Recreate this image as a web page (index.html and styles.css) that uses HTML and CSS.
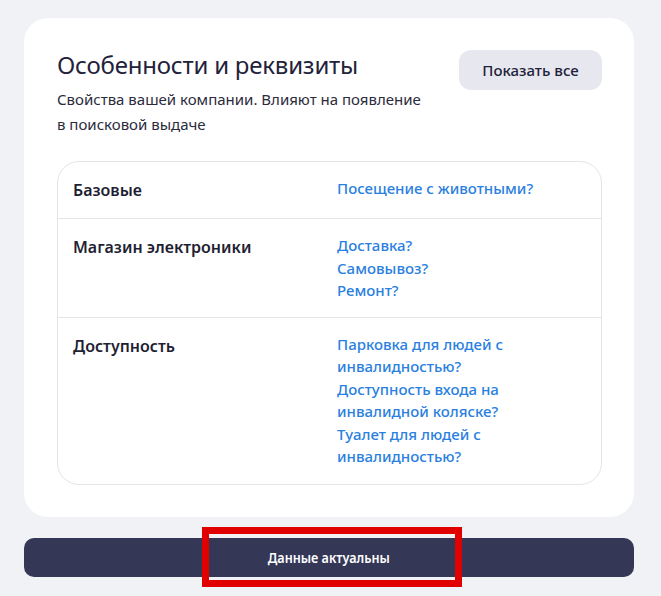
FILE: index.html
```html
<!DOCTYPE html>
<html lang="ru">
<head>
<meta charset="utf-8">
<link rel="stylesheet" href="styles.css">
</head>
<body>
<div class="page">
  <section class="card">
    <div class="head">
      <div class="head-text">
        <h2 class="title">Особенности и реквизиты</h2>
        <p class="subtitle">Свойства вашей компании. Влияют на появление<br>в поисковой выдаче</p>
      </div>
      <button class="show-all">Показать все</button>
    </div>
    <div class="table">
      <div class="row">
        <div class="label">Базовые</div>
        <div class="links"><a>Посещение с животными?</a></div>
      </div>
      <div class="row">
        <div class="label">Магазин электроники</div>
        <div class="links"><a>Доставка?</a><a>Самовывоз?</a><a>Ремонт?</a></div>
      </div>
      <div class="row">
        <div class="label">Доступность</div>
        <div class="links"><a>Парковка для людей с инвалидностью?</a><a>Доступность входа на инвалидной коляске?</a><a>Туалет для людей с инвалидностью?</a></div>
      </div>
    </div>
  </section>
  <div class="actual-wrap">
    <button class="actual"><span class="actual-text">Данные актуальны</span></button>
    <div class="highlight"></div>
  </div>
</div>
</body>
</html>
```
FILE: styles.css
```css
* { box-sizing: border-box; }
html, body { margin: 0; padding: 0; }
body {
  background: #f1f2f6;
  font-family: "Noto Sans", "Open Sans", sans-serif;
  color: #22223a;
  width: 661px;
  height: 596px;
  overflow: hidden;
}
.page {
  padding: 18px 27px 0 24px;
  display: flex;
  flex-direction: column;
  gap: 21px;
}
.card {
  background: #fff;
  border-radius: 24px;
  padding: 32px 32px 32px 33px;
}
.head {
  display: flex;
  justify-content: space-between;
  align-items: flex-start;
}
.title {
  margin: 0;
  font-size: 24px;
  font-weight: 400;
  line-height: 30px;
  color: #22223a;
  letter-spacing: -0.2px;
}
.subtitle {
  margin: 7px 0 0;
  font-size: 15px;
  line-height: 25px;
  color: #2b2b3c;
}
.show-all {
  border: none;
  background: #e7e8ef;
  border-radius: 12px;
  height: 40px;
  width: 143px;
  font-family: inherit;
  font-size: 15px;
  font-weight: 500;
  color: #22223a;
  padding: 0;
}
.table {
  margin-top: 24px;
  border: 1px solid #e4e5ea;
  border-radius: 22px;
  overflow: hidden;
}
.row {
  display: grid;
  grid-template-columns: 264px 1fr;
  padding: 15px 16px 16px 15px;
  border-top: 1px solid #e4e5ea;
}
.row:first-child { border-top: none; }
.row:nth-child(2) { padding-bottom: 15px; }
.label {
  font-size: 16px;
  font-weight: 600;
  line-height: 24px;
  color: #1f1f33;
  padding-top: 1px;
}
.links {
  display: flex;
  flex-direction: column;
  width: 215px;
}
.links a {
  font-size: 15px;
  font-weight: 500;
  line-height: 22.5px;
  color: #2a7fe0;
}
.actual-wrap {
  position: relative;
}
.actual {
  width: 100%;
  height: 39px;
  border: none;
  border-radius: 10px;
  background: #353757;
  color: #fff;
  font-family: "Noto Sans", sans-serif;
  font-size: 14px;
  font-weight: 600;
  padding: 0;
}
.actual-text {
  display: inline-block;
  transform: scaleX(0.9);
}
.highlight {
  position: absolute;
  left: 178px;
  top: -11px;
  width: 260px;
  height: 60px;
  border: 7px solid #e00000;
  pointer-events: none;
}
```
